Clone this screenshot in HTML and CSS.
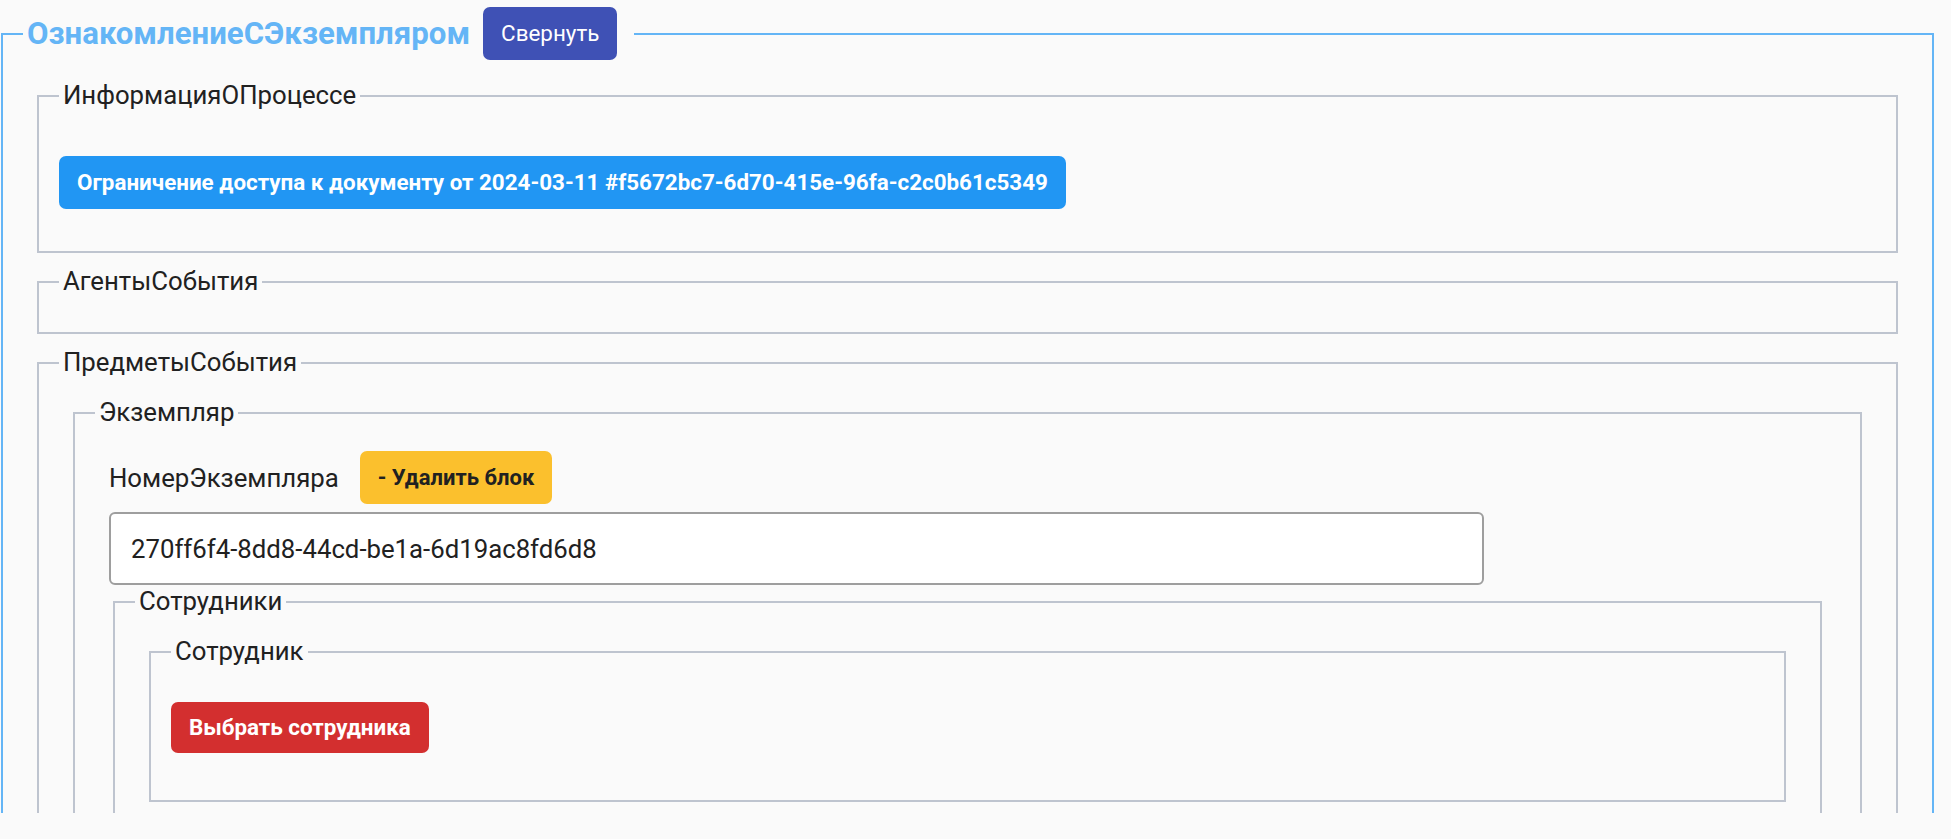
FILE: index.html
```html
<!DOCTYPE html>
<html lang="ru">
<head>
    <meta charset="UTF-8">
    <meta name="viewport" content="width=device-width, initial-scale=1.0">
    <title>ОзнакомлениеСЭкземпляром</title>
    <link rel="stylesheet" href="styles.css">
</head>
<body>
    <div class="page">
        <fieldset class="block block-root">
            <legend class="root-legend">
                <span class="root-title">ОзнакомлениеСЭкземпляром</span>
                <button type="button" class="btn btn-collapse">Свернуть</button>
            </legend>

            <fieldset class="block">
                <legend>ИнформацияОПроцессе</legend>
                <div class="process-info">
                    <button type="button" class="btn btn-info">Ограничение доступа к документу от 2024-03-11 #f5672bc7-6d70-415e-96fa-c2c0b61c5349</button>
                </div>
            </fieldset>

            <fieldset class="block">
                <legend>АгентыСобытия</legend>
            </fieldset>

            <fieldset class="block">
                <legend>ПредметыСобытия</legend>
                <fieldset class="block">
                    <legend>Экземпляр</legend>
                    <div class="field">
                        <div class="field-head">
                            <label for="copy-number">НомерЭкземпляра</label>
                            <button type="button" class="btn btn-remove">- Удалить блок</button>
                        </div>
                        <input type="text" id="copy-number" class="field-input" value="270ff6f4-8dd8-44cd-be1a-6d19ac8fd6d8">
                    </div>
                    <fieldset class="block block-list">
                        <legend>Сотрудники</legend>
                        <fieldset class="block">
                            <legend>Сотрудник</legend>
                            <div class="picker">
                                <button type="button" class="btn btn-danger">Выбрать сотрудника</button>
                            </div>
                        </fieldset>
                    </fieldset>
                </fieldset>
            </fieldset>
        </fieldset>
    </div>
</body>
</html>
```

FILE: styles.css
```css
body {
    margin: 0;
    background-color: #fafafa;
    font-family: Roboto, "Noto Sans", Arial, sans-serif;
    color: #212121;
}

.page {
    height: 813px;
    overflow: hidden;
    padding: 7px 17px 0 1px;
    box-sizing: border-box;
}

.block {
    border: 2px solid #bec4cf;
    margin: 0 14px 14px;
    padding: 21px 20px 15px;
    min-width: 0;
}

.block legend {
    padding: 0 4px;
    font-size: 25.75px;
    line-height: 29px;
}

.block-root {
    margin: 0;
    border-color: #64b5f6;
}

.root-legend {
    display: flex;
    align-items: center;
}

.root-title {
    font-size: 31.2px;
    font-weight: 700;
    line-height: 1;
    color: #64b5f6;
}

.btn {
    border: none;
    border-radius: 7px;
    padding: 12px 18px;
    font-family: inherit;
    font-size: 22.4px;
    line-height: 29px;
    font-weight: 700;
    color: #fff;
    cursor: pointer;
}

.btn-collapse {
    margin: 0 13px 0 13px;
    background-color: #3f51b5;
    font-weight: 400;
}

.btn-info {
    background-color: #2196f3;
}

.btn-remove {
    background-color: #fbc02d;
    color: #212121;
    font-size: 22px;
}

.btn-danger {
    padding: 11px 18px;
    background-color: #d32f2f;
}

.process-info {
    padding: 25px 0 27px;
}

.field {
    margin: 0 14px;
    padding-top: 3px;
}

.field-head {
    display: flex;
    align-items: center;
    gap: 21px;
}

.field-head label {
    font-size: 25.75px;
}

.field-input {
    display: block;
    box-sizing: border-box;
    width: 1375px;
    height: 73px;
    margin-top: 8px;
    padding: 0 20px;
    border: 2px solid #9e9e9e;
    border-radius: 6px;
    background-color: #fff;
    font-family: inherit;
    font-size: 25.75px;
    color: #212121;
}

.block-list {
    margin: 2px 18px 14px;
}

.picker {
    padding: 15px 0 32px;
}
```
